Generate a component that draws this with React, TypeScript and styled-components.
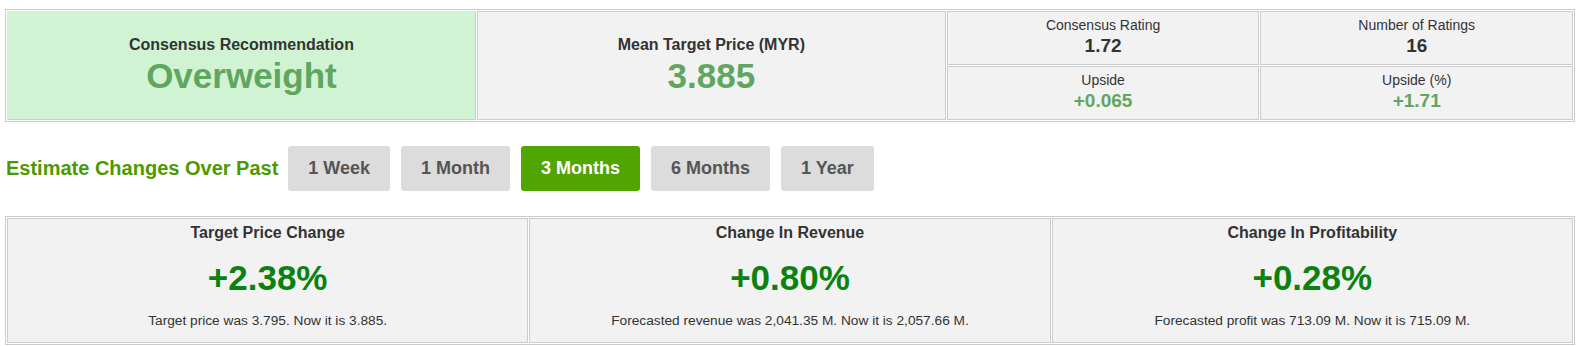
import { createGlobalStyle, styled } from "styled-components";

const GlobalStyle = createGlobalStyle`
  body {
    margin: 0;
    background: #fff;
    font-family: "Liberation Sans", Arial, sans-serif;
    color: #333;
  }
`;

const Page = styled.div`
  padding: 9px 5px 0;
`;

const SummaryGrid = styled.div`
  display: grid;
  grid-template-columns: 3fr 3fr 2fr 2fr;
  grid-template-rows: 54px 54px;
  gap: 1px;
  padding: 1px;
  border: 1px solid #ccc;
`;

const BigCell = styled.div<{ $highlight?: boolean }>`
  grid-row: span 2;
  display: flex;
  flex-direction: column;
  align-items: center;
  justify-content: center;
  background: ${(p) => (p.$highlight ? "#d0f4d3" : "#f2f2f2")};
  border: 1px solid ${(p) => (p.$highlight ? "#d0f4d3" : "#ccc")};
  border-right-color: #ccc;
  border-bottom-color: #ccc;
  text-align: center;
`;

const BigLabel = styled.div`
  font-size: 16px;
  font-weight: bold;
  line-height: 18px;
  color: #333;
`;

const BigValue = styled.div`
  margin-top: 2px;
  font-size: 35px;
  font-weight: bold;
  line-height: 40px;
  color: #60a660;
`;

const SmallCell = styled.div`
  display: flex;
  flex-direction: column;
  align-items: center;
  padding-top: 5px;
  background: #f2f2f2;
  border: 1px solid #ccc;
  text-align: center;
`;

const SmallLabel = styled.div`
  font-size: 14px;
  line-height: 16px;
  color: #333;
`;

const SmallValue = styled.div<{ $positive?: boolean }>`
  margin-top: 2px;
  font-size: 19px;
  font-weight: bold;
  line-height: 22px;
  color: ${(p) => (p.$positive ? "#60a660" : "#333")};
`;

const PeriodRow = styled.div`
  display: flex;
  align-items: center;
  gap: 11px;
  margin-top: 24px;
  padding-left: 1px;
`;

const PeriodTitle = styled.div`
  margin-right: -1px;
  font-size: 20px;
  font-weight: bold;
  color: #4c9a00;
`;

const PeriodButton = styled.button<{ $active?: boolean }>`
  height: 45px;
  padding: 0 20px;
  border: none;
  border-radius: 3px;
  background: ${(p) => (p.$active ? "#50a500" : "#dcdcdc")};
  color: ${(p) => (p.$active ? "#fff" : "#555")};
  font-family: "Liberation Sans", Arial, sans-serif;
  font-size: 18px;
  font-weight: bold;
  cursor: pointer;
`;

const ChangeGrid = styled.div`
  display: grid;
  grid-template-columns: 1fr 1fr 1fr;
  grid-template-rows: 125px;
  gap: 1px;
  margin-top: 25px;
  padding: 1px;
  border: 1px solid #ccc;
`;

const ChangeCell = styled.div`
  display: flex;
  flex-direction: column;
  align-items: center;
  padding-top: 5px;
  background: #f2f2f2;
  border: 1px solid #ccc;
  text-align: center;
`;

const ChangeTitle = styled.div`
  font-size: 16px;
  font-weight: bold;
  line-height: 18px;
  color: #333;
`;

const ChangeValue = styled.div`
  margin-top: 16px;
  font-size: 35px;
  font-weight: bold;
  line-height: 39px;
  color: #0a820f;
`;

const ChangeNote = styled.div`
  margin-top: 16px;
  font-size: 13.7px;
  line-height: 16px;
  color: #333;
`;

const periods = ["1 Week", "1 Month", "3 Months", "6 Months", "1 Year"];

const changes = [
  {
    title: "Target Price Change",
    value: "+2.38%",
    note: "Target price was 3.795. Now it is 3.885.",
  },
  {
    title: "Change In Revenue",
    value: "+0.80%",
    note: "Forecasted revenue was 2,041.35 M. Now it is 2,057.66 M.",
  },
  {
    title: "Change In Profitability",
    value: "+0.28%",
    note: "Forecasted profit was 713.09 M. Now it is 715.09 M.",
  },
];

const App = () => {
  return (
    <Page>
      <GlobalStyle />
      <SummaryGrid>
        <BigCell $highlight>
          <BigLabel>Consensus Recommendation</BigLabel>
          <BigValue>Overweight</BigValue>
        </BigCell>
        <BigCell>
          <BigLabel>Mean Target Price (MYR)</BigLabel>
          <BigValue>3.885</BigValue>
        </BigCell>
        <SmallCell>
          <SmallLabel>Consensus Rating</SmallLabel>
          <SmallValue>1.72</SmallValue>
        </SmallCell>
        <SmallCell>
          <SmallLabel>Number of Ratings</SmallLabel>
          <SmallValue>16</SmallValue>
        </SmallCell>
        <SmallCell>
          <SmallLabel>Upside</SmallLabel>
          <SmallValue $positive>+0.065</SmallValue>
        </SmallCell>
        <SmallCell>
          <SmallLabel>Upside (%)</SmallLabel>
          <SmallValue $positive>+1.71</SmallValue>
        </SmallCell>
      </SummaryGrid>

      <PeriodRow>
        <PeriodTitle>Estimate Changes Over Past</PeriodTitle>
        {periods.map((p) => (
          <PeriodButton key={p} $active={p === "3 Months"}>
            {p}
          </PeriodButton>
        ))}
      </PeriodRow>

      <ChangeGrid>
        {changes.map((c) => (
          <ChangeCell key={c.title}>
            <ChangeTitle>{c.title}</ChangeTitle>
            <ChangeValue>{c.value}</ChangeValue>
            <ChangeNote>{c.note}</ChangeNote>
          </ChangeCell>
        ))}
      </ChangeGrid>
    </Page>
  );
};

export default App;
